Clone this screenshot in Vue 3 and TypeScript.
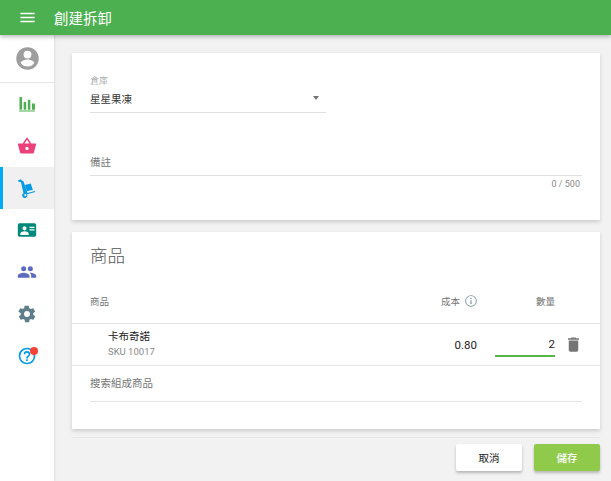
<script setup lang="ts">
interface NavItem { key: string; color: string; path: string; active?: boolean; badge?: boolean }
const nav: NavItem[] = [
  { key: 'bar', color: '#4caf50', path: 'M2.500 21h19v-1.200h-19zM3 19V3.500h3V19zM8 19V9.500h3V19zM13 19V7h3v12zM18 19v-7.500h3.500V19z' },
  { key: 'basket', color: '#ec407a', path: 'M17.200 9 13 2.600a1.200 1.200 0 0 0-2 0L6.800 9H2c-.6 0-1 .4-1 1l.1.3 2.500 9.200c.2.800 1 1.500 1.900 1.500h13c.9 0 1.700-.6 1.900-1.500l2.500-9.200.1-.3c0-.6-.4-1-1-1zM9 9l3-4.400L15 9zm3 8a2 2 0 1 1 0-4 2 2 0 0 1 0 4z' },
  { key: 'cart', color: '#039be5', active: true, path: 'M1 3 4.800 1.500l1 1.400 2 .9L12.500 18l9-2.500.4 1.300-9.900 2.800a3 3 0 1 1-4.200-1.200L4.800 5l-3.200-.7zM10 19.300a1.300 1.300 0 1 0 0 2.600 1.300 1.300 0 0 0 0-2.600zM9.500 8.500l7-2 2.500 7.500-7 2z' },
  { key: 'card', color: '#00897b', path: 'M3 4h18a2 2 0 0 1 2 2v12a2 2 0 0 1-2 2H3a2 2 0 0 1-2-2V6a2 2 0 0 1 2-2zm6 3.500a2.500 2.500 0 1 0 0 5 2.500 2.500 0 0 0 0-5zM4 18h10v-2c0-1.700-3.300-2.500-5-2.500S4 14.300 4 16zM15 8v1.500h6V8zm0 3v1.500h6V11z' },
  { key: 'people', color: '#5c6bc0', path: 'M16 11a3 3 0 1 0 0-6 3 3 0 0 0 0 6zm-8 0a3 3 0 1 0 0-6 3 3 0 0 0 0 6zm0 2c-2.300 0-7 1.200-7 3.500V19h14v-2.500C15 14.200 10.300 13 8 13zm8 0h-1c1.200.8 2 2 2 3.500V19h6v-2.500c0-2.300-4.700-3.500-7-3.500z' },
  { key: 'gear', color: '#607d8b', path: 'M19.400 13c0-.3.100-.6.100-1s0-.7-.1-1l2.100-1.600c.2-.2.200-.4.100-.6l-2-3.500c-.1-.2-.4-.3-.6-.2l-2.500 1c-.5-.4-1.100-.7-1.700-1L14 2.400c0-.2-.2-.4-.5-.4h-4c-.3 0-.5.200-.5.400l-.4 2.700c-.6.200-1.100.6-1.700 1l-2.500-1c-.2-.1-.5 0-.6.200l-2 3.500c-.1.200-.1.500.1.600L4.600 11c0 .3-.1.700-.1 1s0 .7.100 1l-2.100 1.600c-.2.200-.2.400-.1.600l2 3.500c.1.200.4.300.6.200l2.500-1c.5.400 1.100.7 1.700 1l.4 2.700c0 .2.200.4.500.4h4c.3 0 .5-.2.500-.4l.4-2.700c.6-.2 1.100-.6 1.700-1l2.500 1c.2.100.5 0 .6-.2l2-3.500c.1-.2.100-.5-.1-.6zM12 15.500a3.500 3.500 0 1 1 0-7 3.500 3.500 0 0 1 0 7z' },
  { key: 'help', color: '#039be5', badge: true, path: 'M11 18h2v-2h-2zm1-16a10 10 0 1 0 0 20 10 10 0 0 0 0-20zm0 18a8 8 0 1 1 0-16 8 8 0 0 1 0 16zm0-14a4 4 0 0 0-4 4h2a2 2 0 1 1 4 0c0 2-3 1.800-3 5h2c0-2.300 3-2.500 3-5a4 4 0 0 0-4-4z' }
]
</script>

<template>
  <div class="app">
    <header class="topbar">
      <svg class="menu" viewBox="0 0 24 24" width="19" height="19"><path d="M3 18h18v-2H3zm0-5h18v-2H3zm0-7v2h18V6z" fill="#fff" /></svg>
      <span class="title">創建拆卸</span>
    </header>
    <div class="body">
      <aside class="side">
        <div class="profile">
          <svg viewBox="0 0 24 24" width="27" height="27"><path fill="#9e9e9e" d="M12 2a10 10 0 1 0 0 20 10 10 0 0 0 0-20zm0 3a3.500 3.500 0 1 1 0 7 3.500 3.500 0 0 1 0-7zm0 14.200a7.300 7.300 0 0 1-6-3.200c0-2 4-3.100 6-3.100s6 1.100 6 3.100a7.300 7.300 0 0 1-6 3.200z" /></svg>
        </div>
        <div v-for="n in nav" :key="n.key" class="nav" :class="{ active: n.active }">
          <span class="ico">
            <svg viewBox="0 0 24 24" width="20" height="20"><path :fill="n.color" :d="n.path" /></svg>
            <i v-if="n.badge" class="badge"></i>
          </span>
        </div>
      </aside>
      <main class="main">
        <section class="card top">
          <div class="select">
            <label>倉庫</label>
            <div class="value"><span>星星果凍</span><i class="caret"></i></div>
          </div>
          <div class="note">備註</div>
          <div class="counter">0 / 500</div>
        </section>
        <section class="card goods">
          <h2>商品</h2>
          <div class="thead">
            <span class="c-name">商品</span>
            <span class="c-cost">成本
              <svg viewBox="0 0 24 24" width="14" height="14"><path fill="#78909c" d="M11 7h2v2h-2zm0 4h2v6h-2zm1-9a10 10 0 1 0 0 20 10 10 0 0 0 0-20zm0 18.500a8.500 8.500 0 1 1 0-17 8.500 8.500 0 0 1 0 17z" /></svg>
            </span>
            <span class="c-qty">數量</span>
          </div>
          <div class="row">
            <div class="item">
              <div class="name">卡布奇諾</div>
              <div class="sku">SKU 10017</div>
            </div>
            <div class="cost">0.80</div>
            <div class="qty">2</div>
            <svg class="trash" viewBox="0 0 24 24" width="19" height="19"><path fill="#757575" d="M6 19a2 2 0 0 0 2 2h8a2 2 0 0 0 2-2V7H6zM19 4h-3.500l-1-1h-5l-1 1H5v2h14z" /></svg>
          </div>
          <div class="search">搜索組成商品</div>
        </section>
        <footer class="actions">
          <button class="btn cancel">取消</button>
          <button class="btn save">儲存</button>
        </footer>
      </main>
    </div>
  </div>
</template>

<style>
html, body { margin: 0; overflow: hidden; background: #f2f2f2; }
</style>

<style scoped>
.app { width: 611px; height: 481px; overflow: hidden; display: flex; flex-direction: column; font-family: Roboto, "Noto Sans CJK TC", sans-serif; color: #212121; background: #f2f2f2; }
.topbar { height: 35px; flex: none; background: #4caf50; display: flex; align-items: center; color: #fff; box-shadow: 0 2px 4px rgba(0,0,0,.25); position: relative; z-index: 2; }
.menu { margin-left: 17.500px; }
.title { margin-left: 17.500px; font-size: 14.500px; }
.body { flex: 1; display: flex; min-height: 0; }
.side { width: 54px; flex: none; background: #fff; box-shadow: 1px 0 2px rgba(0,0,0,.08); }
.profile { height: 47px; border-bottom: 1px solid #e4e4e4; display: flex; align-items: center; justify-content: center; }
.nav { height: 42px; display: flex; align-items: center; justify-content: center; border-left: 3px solid transparent; padding-right: 3px; }
.nav.active { background: #f0f0f0; border-left-color: #03a9f4; }
.ico { position: relative; display: flex; }
.badge { position: absolute; top: 1px; right: -1px; width: 8px; height: 8px; border-radius: 50%; background: #f44336; }
.main { flex: 1; padding: 18px 11px 0 18px; min-width: 0; }
.card { background: #fff; box-shadow: 0 2px 4px rgba(0,0,0,.16); }
.top { height: 167px; box-sizing: border-box; padding: 23px 18px 0; }
.select { width: 236px; border-bottom: 1px solid #e0e0e0; height: 37px; box-sizing: border-box; }
.select label { display: block; font-size: 9px; line-height: 11px; color: #8a8a8a; font-weight: 300; }
.value { display: flex; justify-content: space-between; align-items: center; font-size: 10.500px; line-height: 17px; margin-top: 4px; color: #333; }
.caret { width: 0; height: 0; border-left: 3px solid transparent; border-right: 3px solid transparent; border-top: 4px solid #757575; margin: 0 7px 4px 0; }
.note { margin-top: 41px; height: 21px; border-bottom: 1px solid #e0e0e0; font-size: 10.500px; line-height: 18px; color: #757575; }
.counter { text-align: right; font-size: 9px; line-height: 16px; color: #8a8a8a; margin-right: 2px; }
.goods { height: 197px; margin-top: 12px; }
h2 { margin: 0; padding: 12px 18px 0; font-size: 17.500px; font-weight: 300; line-height: 24px; color: #555; }
.thead { display: flex; align-items: center; height: 56px; padding: 11px 0 0 18px; border-bottom: 1px solid #e4e4e4; font-size: 9.500px; color: #757575; box-sizing: border-box; }
.c-name { flex: 1; }
.c-cost { display: flex; align-items: center; gap: 4px; white-space: nowrap; margin-right: 17px; }
.c-qty { width: 60px; text-align: right; margin-right: 45px; }
.row { display: flex; align-items: center; height: 42px; box-sizing: border-box; border-bottom: 1px solid #e4e4e4; }
.item { flex: 1; padding-left: 36px; }
.name { font-size: 10.500px; line-height: 14px; }
.sku { font-size: 9.500px; line-height: 14px; color: #8a8a8a; margin-top: 1px; }
.cost { font-size: 11.500px; width: 40px; text-align: right; margin-right: 18px; }
.qty { width: 60px; height: 24px; box-sizing: border-box; align-self: flex-start; margin-top: 9px; text-align: right; font-size: 11.500px; line-height: 22px; border-bottom: 2px solid #53b745; }
.trash { margin: 0 17px 0 9px; }
.search { margin: 0 18px; height: 36px; box-sizing: border-box; border-bottom: 1px solid #e4e4e4; font-size: 10.500px; line-height: 35px; color: #757575; }
.actions { margin-top: 8px; border-top: 1px solid #e8e8e8; padding-top: 6px; display: flex; justify-content: flex-end; gap: 12px; }
.btn { width: 66px; height: 27px; border: 0; border-radius: 2px; font-family: inherit; font-size: 10.500px; padding: 0; box-shadow: 0 2px 3px rgba(0,0,0,.25); }
.cancel { background: #fff; color: #212121; }
.save { background: #8fca4b; color: #fff; font-weight: 500; }
</style>
